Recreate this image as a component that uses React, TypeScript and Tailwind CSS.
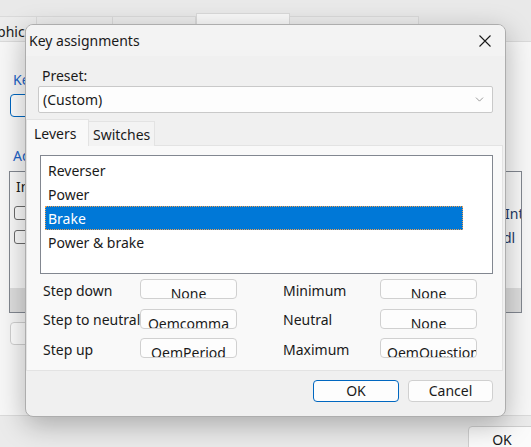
import { ChevronDown } from 'lucide-react';

const bgTabs = [
  { label: 'Graphics', w: 'w-[68px]', selected: false },
  { label: 'Audio', w: 'w-[76px]', selected: false },
  { label: 'Simulation', w: 'w-[83px]', selected: false },
  { label: 'Input device', w: 'w-[94px]', selected: true },
  { label: 'Advanced options', w: 'w-[129px]', selected: false },
];

const levers = ['Reverser', 'Power', 'Brake', 'Power & brake'];

const keyRows = [
  { left: 'Step down', leftKey: 'None', right: 'Minimum', rightKey: 'None' },
  { left: 'Step to neutral', leftKey: 'Oemcomma', right: 'Neutral', rightKey: 'None' },
  { left: 'Step up', leftKey: 'OemPeriod', right: 'Maximum', rightKey: 'OemQuestion' },
];

function KeyButton({ text }: { text: string }) {
  return (
    <div className="w-[97px] h-[20px] rounded-[4px] border border-[#d0d0d0] bg-[#fdfdfd] overflow-hidden px-[6px] text-center whitespace-nowrap leading-[20px] pt-[4px]">
      {text}
    </div>
  );
}

function KeyAssignments() {
  return (
    <div className="absolute left-[25px] top-[24px] w-[481px] h-[393px] rounded-[8px] border border-[#adadad] bg-[#f0f0f0] overflow-hidden flex flex-col shadow-[0_8px_28px_rgba(0,0,0,0.28)]">
      {/* Title bar */}
      <div className="h-[31px] bg-[#f3f3f3] flex items-center justify-between pl-[3px] shrink-0">
        <span className="text-[#1a1a1a]">Key assignments</span>
        <div className="w-[40px] h-full flex items-center justify-center">
          <svg width="12" height="12" viewBox="0 0 12 12" className="text-[#1a1a1a]">
            <path d="M0.5 0.5 L11.5 11.5 M11.5 0.5 L0.5 11.5" stroke="currentColor" strokeWidth="1.1" fill="none" />
          </svg>
        </div>
      </div>

      <div className="flex-1 flex flex-col">
        <div className="pl-[16px] mt-[10px] leading-[20px]">Preset:</div>
        <div className="ml-[12px] w-[455px] h-[27px] rounded-[2px] border border-[#c9c9c9] bg-[#fdfdfd] flex items-center justify-between pl-[4px] pr-[6px]">
          <span>(Custom)</span>
          <ChevronDown size={13} strokeWidth={1.1} className="text-[#5a5a5a]" />
        </div>

        {/* Tabs */}
        <div className="mt-[6px] h-[27px] flex items-end relative z-10">
          <div className="w-[63px] h-[27px] bg-[#f9f9f9] border border-b-0 border-[#e3e3e3] flex items-center pl-[7px]">
            Levers
          </div>
          <div className="w-[66px] h-[25px] bg-[#f3f3f3] border border-l-0 border-b-0 border-[#e3e3e3] flex items-center pl-[4px]">
            Switches
          </div>
        </div>
        <div className="w-[477px] h-[226px] -mt-px border border-[#e3e3e3] bg-[#f9f9f9] flex flex-col">
          <div className="mt-[9px] ml-[13px] w-[453px] h-[119px] border border-[#828790] bg-white pt-[2px] pl-[4px]">
            {levers.map((item) => (
              <div
                key={item}
                className={
                  item === 'Brake'
                    ? 'w-[418px] h-[24px] pl-[2px] flex items-center bg-[#0078d7] text-white border border-dotted border-[#f0a050]'
                    : 'w-[418px] h-[24px] pl-[3px] flex items-center'
                }
              >
                {item}
              </div>
            ))}
          </div>

          <div className="mt-[5px] pl-[16px] flex flex-col gap-[9.5px]">
            {keyRows.map((row) => (
              <div key={row.left} className="flex items-center h-[20px]">
                <span className="w-[97px] whitespace-nowrap leading-[20px] pt-[3px]">{row.left}</span>
                <KeyButton text={row.leftKey} />
                <span className="ml-[46px] w-[97px] leading-[20px] pt-[3px]">{row.right}</span>
                <KeyButton text={row.rightKey} />
              </div>
            ))}
          </div>
        </div>

        {/* Footer */}
        <div className="flex-1 flex items-start justify-end gap-[9px] pr-[12px] pt-[9px]">
          <button className="w-[86px] h-[22px] rounded-[4px] border border-[#0067c0] bg-[#fdfdfd] leading-none">
            OK
          </button>
          <button className="w-[85px] h-[22px] rounded-[4px] border border-[#d0d0d0] bg-[#fdfdfd] leading-none">
            Cancel
          </button>
        </div>
      </div>
    </div>
  );
}

export default function App() {
  return (
    <div className="relative w-[531px] h-[447px] overflow-hidden bg-[#ebebeb] text-[14px] text-[#1a1a1a] font-['Noto_Sans','Liberation_Sans',sans-serif]">
      {/* Background options window */}
      <div className="flex flex-col h-full">
        <div className="h-[41px] flex items-end -ml-[31px] shrink-0 bg-[#e9e9e9]">
          {bgTabs.map((tab) => (
            <div
              key={tab.label}
              className={
                tab.selected
                  ? `${tab.w} h-[28px] bg-[#f9f9f9] border border-b-0 border-[#dadada] flex justify-center whitespace-nowrap overflow-hidden pt-[9px] leading-[20px]`
                  : `${tab.w} h-[25px] bg-[#ececec] border border-l-0 border-b-0 border-[#dadada] flex justify-center whitespace-nowrap overflow-hidden pt-[5px] leading-[20px]`
              }
            >
              {tab.label}
            </div>
          ))}
        </div>

        <div className="flex-1 bg-[#f7f7f7] border-t border-[#dadada] border-b pl-[9px] flex flex-col">
          <div className="mt-[28px] ml-[4px] leading-[20px] text-[#1c63c7]">Keyboard</div>
          <div className="mt-[4px] ml-[1px] w-[120px] h-[23px] rounded-[4px] border border-[#0067c0] bg-[#fdfdfd]" />
          <div className="mt-[29px] ml-[4px] leading-[20px] text-[#1c63c7]">Advanced</div>
          <div className="mt-[5px] w-[513px] h-[142px] border border-[#828790] bg-[#f9f9f9] flex flex-col">
            <div className="pl-[6px] pt-[5px] leading-[20px]">Input device plugins</div>
            <div className="mt-[4px] h-[24px] flex items-center pl-[4px]">
              <div className="w-[14px] h-[14px] rounded-[3px] border border-[#6b6b6b] bg-[#fbfbfb]" />
              <div className="flex-1" />
              <span className="w-[16px] overflow-hidden whitespace-nowrap text-[#1f3a66]">Interface</span>
            </div>
            <div className="h-[24px] flex items-center pl-[4px]">
              <div className="w-[14px] h-[14px] rounded-[3px] border border-[#6b6b6b] bg-[#fbfbfb]" />
              <div className="flex-1" />
              <span className="w-[18px] overflow-hidden whitespace-nowrap text-[#1f3a66]">dl</span>
            </div>
            <div className="flex-1" />
            <div className="h-[24px] bg-[#dedede]" />
          </div>
          <div className="mt-[9px] ml-[1px] w-[120px] h-[23px] rounded-[4px] border border-[#d0d0d0] bg-[#fdfdfd]" />
        </div>

        <div className="h-[31px] shrink-0 bg-[#ebebeb] flex items-start justify-end pt-[10px]">
          <div className="w-[68px] h-[26px] -mr-[5px] rounded-[4px] border border-[#cfcfcf] bg-[#fbfbfb] flex items-center justify-center">
            OK
          </div>
        </div>
      </div>

      <KeyAssignments />
    </div>
  );
}
